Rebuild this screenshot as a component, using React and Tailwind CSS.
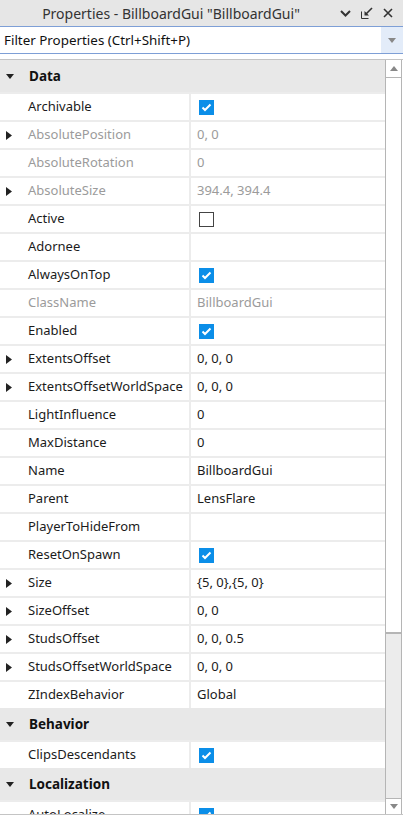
import React from 'react'

// Properties panel, Roblox Studio style
const rows = [
  { type: 'header', name: 'Data' },
  { name: 'Archivable', check: true },
  { name: 'AbsolutePosition', value: '0, 0', expand: true, dim: true },
  { name: 'AbsoluteRotation', value: '0', dim: true },
  { name: 'AbsoluteSize', value: '394.4, 394.4', expand: true, dim: true },
  { name: 'Active', check: false },
  { name: 'Adornee', value: '' },
  { name: 'AlwaysOnTop', check: true },
  { name: 'ClassName', value: 'BillboardGui', dim: true },
  { name: 'Enabled', check: true },
  { name: 'ExtentsOffset', value: '0, 0, 0', expand: true },
  { name: 'ExtentsOffsetWorldSpace', value: '0, 0, 0', expand: true },
  { name: 'LightInfluence', value: '0' },
  { name: 'MaxDistance', value: '0' },
  { name: 'Name', value: 'BillboardGui' },
  { name: 'Parent', value: 'LensFlare' },
  { name: 'PlayerToHideFrom', value: '' },
  { name: 'ResetOnSpawn', check: true },
  { name: 'Size', value: '{5, 0},{5, 0}', expand: true },
  { name: 'SizeOffset', value: '0, 0', expand: true },
  { name: 'StudsOffset', value: '0, 0, 0.5', expand: true },
  { name: 'StudsOffsetWorldSpace', value: '0, 0, 0', expand: true },
  { name: 'ZIndexBehavior', value: 'Global' },
  { type: 'header', name: 'Behavior' },
  { name: 'ClipsDescendants', check: true },
  { type: 'header', name: 'Localization' },
  { name: 'AutoLocalize', check: true },
]

const Check = ({ on }) => on ? (
  <span className='w-[15px] h-[15px] bg-[#0b8ee8] flex items-center justify-center'>
    <svg width="11" height="9" viewBox="0 0 11 9">
      <path d="M1.5 4.5 L4 7 L9.5 1.5" stroke="white" strokeWidth="2" fill="none" />
    </svg>
  </span>
) : (
  <span className='block w-[15px] h-[15px] border border-[#444] bg-white' />
)

const Row = ({ r }) => {
  if (r.type === 'header') {
    return (
      <div className='h-[32px] bg-[#e8e8e8] flex items-center shrink-0'>
        <svg className='ml-[6px] mr-[15px]' width="8" height="5" viewBox="0 0 8 5"><path d="M0 0 L8 0 L4 5 Z" fill="#222" /></svg>
        <span className='font-bold text-[#111] text-[13.5px]'>{r.name}</span>
      </div>
    )
  }
  const color = r.dim ? 'text-[#9b9b9b]' : 'text-[#1b1b1b]'
  return (
    <div className='h-[28px] flex border-t-2 border-[#ececec] shrink-0'>
      <div className={`w-[189px] flex items-center ${color}`}>
        <span className='w-[28px] flex items-center'>
          {r.expand && <svg className='ml-[6px]' width="6" height="9" viewBox="0 0 6 9"><path d="M0 0 L6 4.5 L0 9 Z" fill="#222" /></svg>}
        </span>
        <span className='whitespace-nowrap'>{r.name}</span>
      </div>
      <div className={`flex-1 border-l-2 border-[#ececec] flex items-center pl-[6px] ${color}`}>
        {r.check !== undefined ? <span className='ml-[2px]'><Check on={r.check} /></span> : r.value}
      </div>
    </div>
  )
}

export default function App() {
  return (
    <div className='w-[403px] h-[815px] bg-white flex flex-col overflow-hidden text-[13px]' style={{ fontFamily: '"Noto Sans", "Open Sans", sans-serif' }}>
      {/* title bar */}
      <div className='h-[26px] bg-[#e6e6e6] flex items-center shrink-0'>
        <div className='flex-1 text-center text-[14px] text-[#333] pl-[2px]'>Properties - BillboardGui "BillboardGui"</div>
        <div className='flex items-center gap-[10px] pr-[10px]'>
          <svg width="11" height="7" viewBox="0 0 11 7"><path d="M1 1 L5.5 5.5 L10 1" stroke="#333" strokeWidth="2" fill="none" /></svg>
          <svg width="12" height="12" viewBox="0 0 12 12">
            <path d="M0.5 4.5 V11.5 H7.5" stroke="#333" strokeWidth="1" fill="none" />
            <path d="M11 1 L5 7" stroke="#333" strokeWidth="1.6" />
            <path d="M3.5 4 V8.5 H8 Z" fill="#333" />
          </svg>
          <svg width="10" height="10" viewBox="0 0 10 10"><path d="M1 1 L9 9 M9 1 L1 9" stroke="#333" strokeWidth="1.6" /></svg>
        </div>
      </div>
      {/* filter */}
      <div className='h-[28px] border-y border-[#7e9fd6] flex items-stretch shrink-0'>
        <div className='flex-1 flex items-center pl-[4px] text-[#111] text-[13.4px]'>Filter Properties (Ctrl+Shift+P)</div>
        <div className='w-[22px] bg-[#e3ecf9] flex items-center justify-center'>
          <svg width="8" height="5" viewBox="0 0 8 5"><path d="M0 0 L8 0 L4 5 Z" fill="#888" /></svg>
        </div>
      </div>
      <div className='h-[5px] shrink-0' />
      {/* grid */}
      <div className='flex-1 flex border-t border-b border-[#c4c4c4] min-h-0'>
        <div className='w-[385px] flex flex-col overflow-hidden'>
          {rows.map((r, i) => <Row key={i} r={r} />)}
        </div>
        <div className='w-[17px] border-x border-[#b5b5b5] flex flex-col'>
          <div className='h-[18px] border-b border-[#b5b5b5] flex items-center justify-center shrink-0'>
            <svg width="8" height="5" viewBox="0 0 8 5"><path d="M0 5 L8 5 L4 0 Z" fill="#888" /></svg>
          </div>
          <div className='h-[556px] bg-white border-b-2 border-[#b5b5b5] shrink-0' />
          <div className='flex-1 bg-[#ececec]' />
          <div className='h-[16px] border-t border-[#b5b5b5] bg-white flex items-center justify-center shrink-0'>
            <svg width="8" height="5" viewBox="0 0 8 5"><path d="M0 0 L8 0 L4 5 Z" fill="#888" /></svg>
          </div>
        </div>
      </div>
    </div>
  )
}
